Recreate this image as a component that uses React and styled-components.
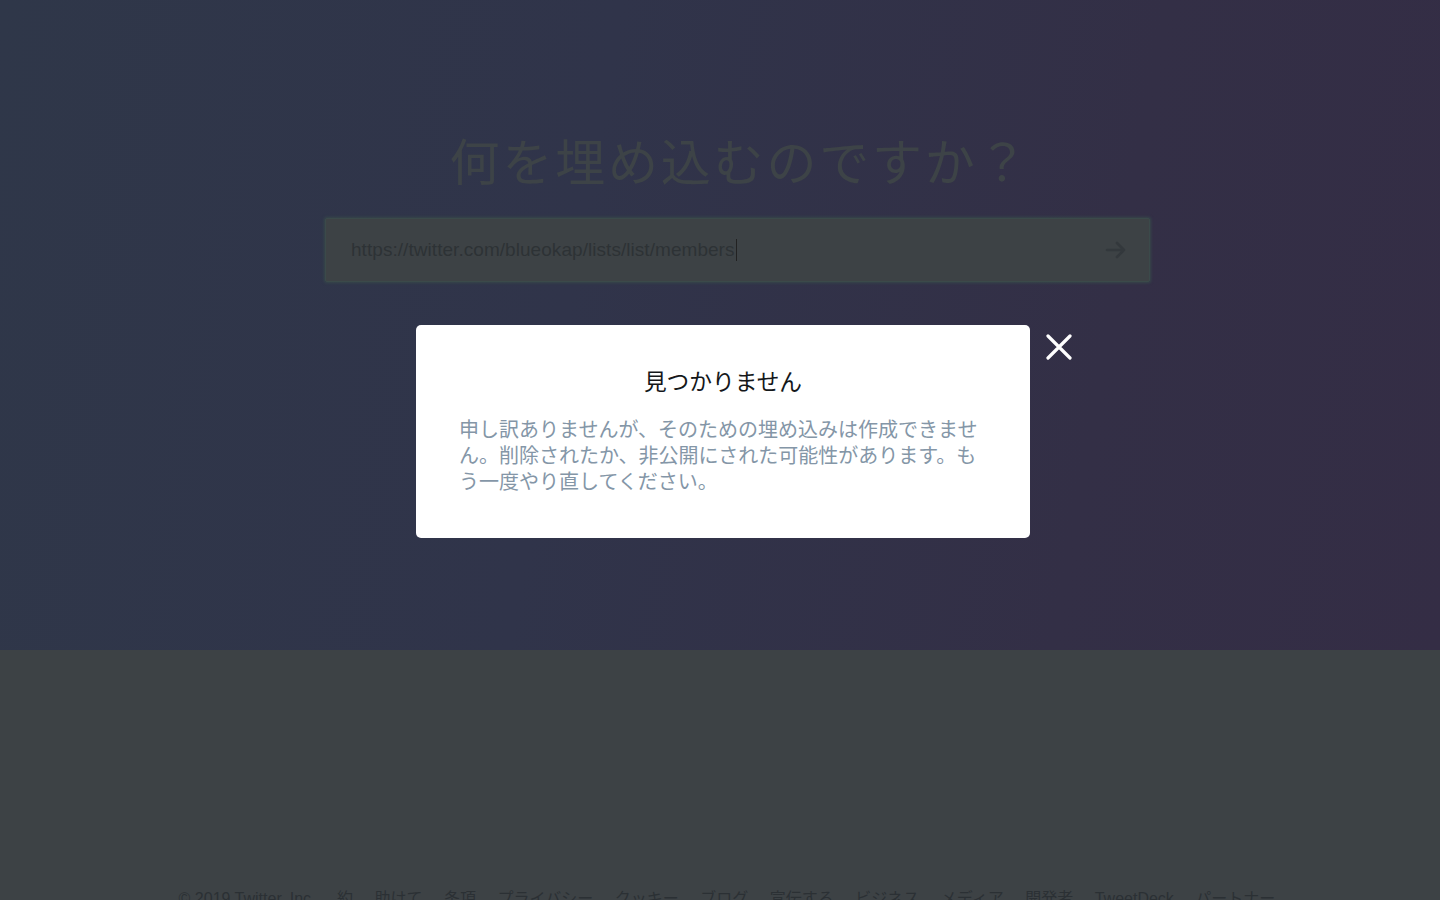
import React from "react";
import styled, { createGlobalStyle } from "styled-components";

const Global = createGlobalStyle`
  html, body { margin: 0; padding: 0; }
  body {
    width: 1440px;
    height: 900px;
    overflow: hidden;
    background: #3d4245;
    font-family: "Liberation Sans", "Noto Sans CJK JP", sans-serif;
  }
`;

const Page = styled.div`
  display: flex;
  flex-direction: column;
  width: 1440px;
  height: 900px;
`;

const Hero = styled.section`
  height: 650px;
  flex: none;
  display: flex;
  flex-direction: column;
  align-items: center;
  padding-top: 126px;
  box-sizing: border-box;
  background: linear-gradient(100deg, #2f3749 0%, #30344a 40%, #332f46 75%, #342d45 100%);
`;

const Heading = styled.h1`
  margin: 0 0 0 40px;
  font-family: "Noto Sans CJK JP", sans-serif;
  font-weight: 400;
  font-size: 50px;
  letter-spacing: 2.8px;
  line-height: 66px;
  color: #3d4347;
`;

const InputBox = styled.div`
  margin-top: 26px;
  margin-left: 35px;
  width: 825px;
  height: 64px;
  box-sizing: border-box;
  display: flex;
  align-items: center;
  justify-content: space-between;
  padding: 0 22px 0 25px;
  background: #3d4245;
  border: 1px solid #3b4a4a;
  box-shadow: 0 0 3px 1px #36484a;
  border-radius: 2px;
`;

const UrlText = styled.span`
  font-family: "Liberation Sans", sans-serif;
  font-size: 19px;
  letter-spacing: 0.05px;
  color: #2d3235;
  display: flex;
  align-items: center;
`;

const Caret = styled.span`
  display: inline-block;
  width: 1px;
  height: 22px;
  background: #222;
  margin-left: 1px;
`;

const FooterArea = styled.section`
  flex: 1;
  background: #3d4245;
  display: flex;
  justify-content: center;
  padding-top: 239px;
  padding-left: 14px;
  box-sizing: border-box;
`;

const FooterLinks = styled.nav`
  display: flex;
  gap: 21.5px;
  font-size: 16px;
  line-height: 20px;
  color: #2b3034;
  white-space: nowrap;
`;

const FooterLink = styled.span``;

const Overlay = styled.div`
  position: fixed;
  inset: 0;
  display: flex;
  justify-content: center;
  align-items: flex-start;
  padding-top: 325px;
  padding-left: 6px;
  box-sizing: border-box;
`;

const Modal = styled.div`
  position: relative;
  width: 614px;
  box-sizing: border-box;
  background: #ffffff;
  border-radius: 5px;
  padding: 42px 43px 44px;
  font-family: "Noto Sans CJK JP", sans-serif;
`;

const ModalTitle = styled.h2`
  margin: 0;
  text-align: center;
  font-weight: 400;
  font-size: 22.7px;
  line-height: 28px;
  color: #14171a;
`;

const ModalBody = styled.p`
  margin: 21px 0 0;
  font-size: 20px;
  line-height: 26px;
  color: #8496a7;
`;

const CloseButton = styled.button`
  position: absolute;
  top: 9px;
  right: -42px;
  width: 26px;
  height: 26px;
  padding: 0;
  border: none;
  background: transparent;
  display: flex;
  align-items: center;
  justify-content: center;
  cursor: pointer;
`;

const links = [
  "© 2019 Twitter, Inc.",
  "約",
  "助けて",
  "条項",
  "プライバシー",
  "クッキー",
  "ブログ",
  "宣伝する",
  "ビジネス",
  "メディア",
  "開発者",
  "TweetDeck",
  "パートナー",
];

export default function App() {
  return (
    <>
      <Global />
      <Page>
        <Hero>
          <Heading>何を埋め込むのですか？</Heading>
          <InputBox>
            <UrlText>
              https://twitter.com/blueokap/lists/list/members
              <Caret />
            </UrlText>
            <svg width="22" height="18" viewBox="0 0 22 18" fill="none">
              <path
                d="M2 9h17M12 2l7 7-7 7"
                stroke="#33383c"
                strokeWidth="2.6"
                strokeLinecap="round"
                strokeLinejoin="round"
              />
            </svg>
          </InputBox>
        </Hero>
        <FooterArea>
          <FooterLinks>
            {links.map((l) => (
              <FooterLink key={l}>{l}</FooterLink>
            ))}
          </FooterLinks>
        </FooterArea>
      </Page>
      <Overlay>
        <Modal>
          <ModalTitle>見つかりません</ModalTitle>
          <ModalBody>
            申し訳ありませんが、そのための埋め込みは作成できません。削除されたか、非公開にされた可能性があります。もう一度やり直してください。
          </ModalBody>
          <CloseButton aria-label="閉じる">
            <svg width="26" height="26" viewBox="0 0 26 26">
              <path
                d="M2 2L24 24M24 2L2 24"
                stroke="#ffffff"
                strokeWidth="3.2"
                strokeLinecap="round"
              />
            </svg>
          </CloseButton>
        </Modal>
      </Overlay>
    </>
  );
}
